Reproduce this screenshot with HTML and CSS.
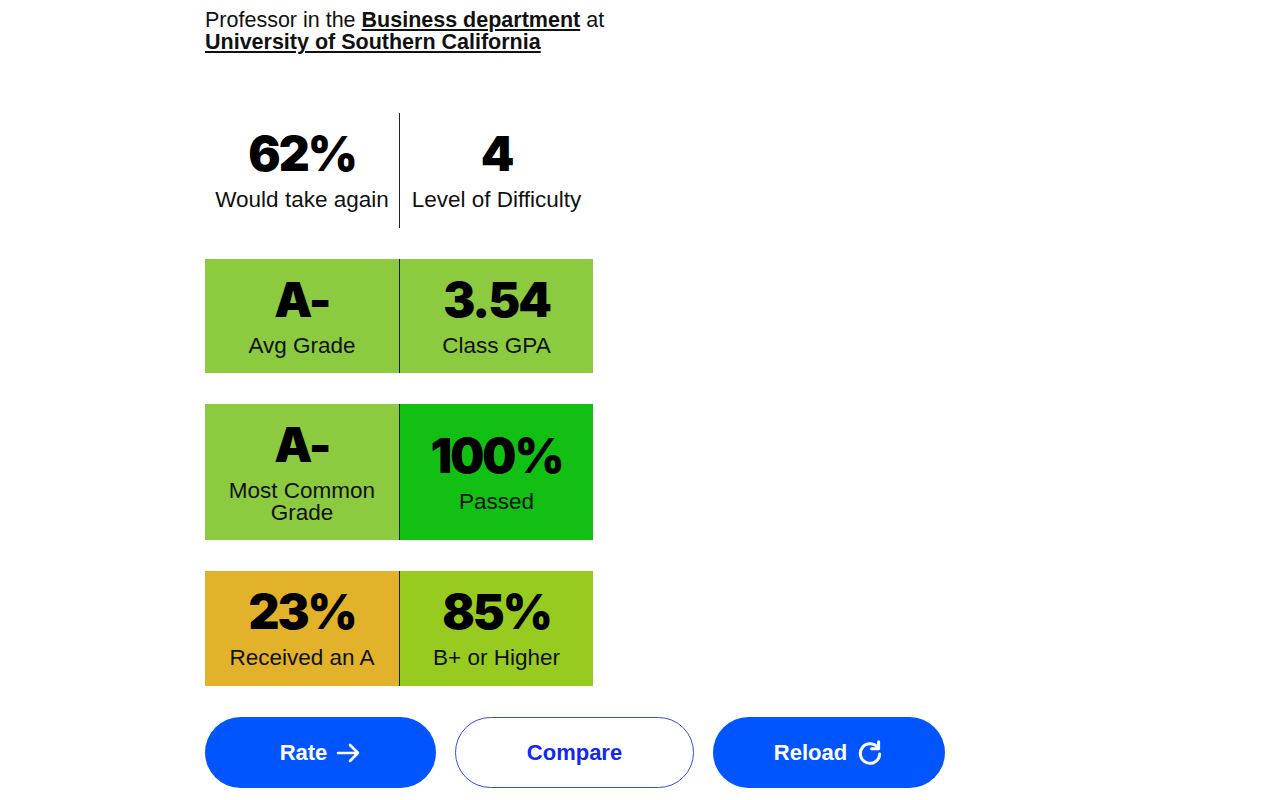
FILE: index.html
```html
<!DOCTYPE html>
<html lang="en">
<head>
<meta charset="utf-8">
<title>Professor ratings</title>
<link rel="stylesheet" href="styles.css">
</head>
<body>
<main class="page">
  <p class="dept">Professor in the <a href="#" class="strong-link">Business department</a> at<br><a href="#" class="strong-link">University of Southern California</a></p>

  <section class="stats">
    <div class="stat">
      <div class="num">62%</div>
      <div class="label">Would take again</div>
    </div>
    <div class="stat stat-right">
      <div class="num">4</div>
      <div class="label">Level of Difficulty</div>
    </div>
  </section>

  <section class="tiles">
    <div class="tile green-light">
      <div class="num">A-</div>
      <div class="label">Avg Grade</div>
    </div>
    <div class="tile green-light divided">
      <div class="num">3.54</div>
      <div class="label">Class GPA</div>
    </div>
  </section>

  <section class="tiles">
    <div class="tile green-light">
      <div class="num">A-</div>
      <div class="label">Most Common<br>Grade</div>
    </div>
    <div class="tile green-bright divided">
      <div class="num">100%</div>
      <div class="label">Passed</div>
    </div>
  </section>

  <section class="tiles tiles-last">
    <div class="tile amber">
      <div class="num">23%</div>
      <div class="label">Received an A</div>
    </div>
    <div class="tile lime divided">
      <div class="num">85%</div>
      <div class="label">B+ or Higher</div>
    </div>
  </section>

  <nav class="actions">
    <a href="#" class="btn btn-fill btn-rate">Rate
      <svg class="icon" width="25" height="20" viewBox="0 0 25 20" fill="none" stroke="#fff" stroke-width="2.6" stroke-linecap="round" stroke-linejoin="round"><path d="M2 10h20M14 2l8 8-8 8"/></svg>
    </a>
    <a href="#" class="btn btn-outline btn-compare">Compare</a>
    <a href="#" class="btn btn-fill btn-reload">Reload
      <svg class="icon" width="28" height="28" viewBox="0 0 26 26" fill="none" stroke="#fff" stroke-width="2.8" stroke-linecap="round" stroke-linejoin="round"><path d="M20.5 8.5A9 9 0 1 0 22 14"/><path d="M21 2.5v6.5h-6.5"/></svg>
    </a>
  </nav>
</main>
</body>
</html>
```

FILE: styles.css
```css
html, body {
  margin: 0;
  padding: 0;
  background: #fff;
}

body {
  font-family: "Liberation Sans", Arial, sans-serif;
  color: #111;
}

.page {
  padding: 9px 0 0 205px;
  width: 760px;
}

.dept {
  margin: 0;
  font-size: 21.5px;
  line-height: 22px;
  color: #111;
}

.strong-link {
  color: #111;
  font-weight: bold;
  text-decoration: underline;
  text-underline-offset: 2px;
  text-decoration-thickness: 2px;
}

.stats {
  display: grid;
  grid-template-columns: 194px 194px;
  margin-top: 60px;
  height: 115px;
}

.stat {
  display: flex;
  flex-direction: column;
  align-items: center;
  justify-content: center;
}

.stat-right {
  border-left: 1px solid #222;
}

.num {
  font-family: Inter, "DejaVu Sans", sans-serif;
  font-weight: 900;
  font-size: 48px;
  line-height: 46px;
  letter-spacing: -2px;
  color: #000;
}

.label {
  margin-top: 12px;
  font-size: 22.5px;
  line-height: 22px;
  text-align: center;
  color: #111;
}

.tiles {
  display: grid;
  grid-template-columns: 194px 194px;
  margin-top: 31px;
}

.tile {
  display: flex;
  flex-direction: column;
  align-items: center;
  justify-content: center;
  padding: 18px 0 16px;
}

.tiles-last .tile {
  padding-bottom: 17px;
}

.divided {
  border-left: 1px solid #1a1a1a;
}

.green-light { background: #8cca3f; }
.green-bright { background: #12c014; }
.amber { background: #e2b22a; }
.lime { background: #98cb1f; }

.actions {
  display: flex;
  gap: 19px;
  margin-top: 31px;
}

.btn {
  display: flex;
  align-items: center;
  justify-content: center;
  gap: 9px;
  height: 71px;
  box-sizing: border-box;
  border-radius: 36px;
  font-size: 22px;
  font-weight: bold;
  text-decoration: none;
}

.btn-fill {
  background: #0055ff;
  color: #fff;
}

.btn-outline {
  background: #fff;
  color: #1228ee;
  border: 1px solid #2f4cff;
}

.btn-rate { width: 231px; }
.btn-compare { width: 239px; }
.btn-reload { width: 232px; }

.icon {
  display: block;
}
```
